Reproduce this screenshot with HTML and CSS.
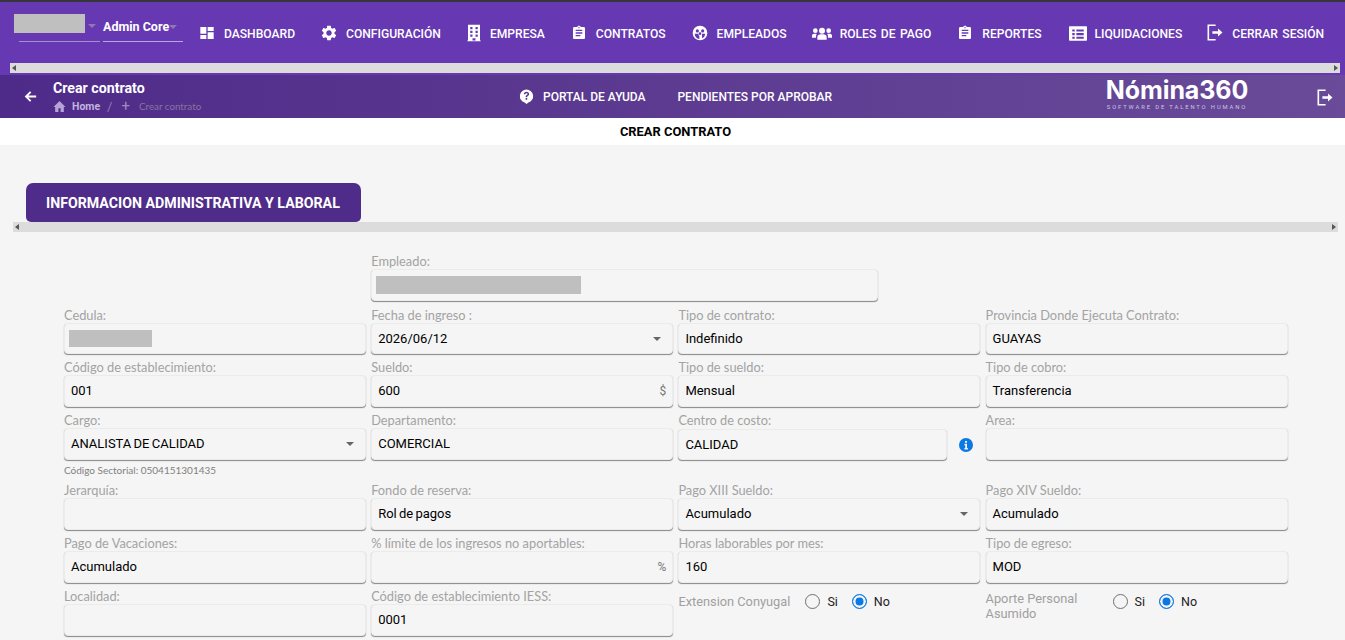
FILE: index.html
```html
<!DOCTYPE html>
<html lang="es">
<head>
<meta charset="utf-8">
<title>Crear contrato</title>
<link rel="stylesheet" href="styles.css">
</head>
<body>
<header class="topnav">
  <div class="topnav-row">
    <div class="selectors">
      <div class="sel sel-company"><span class="redact redact-co"></span><span class="caret caret-dim"></span></div>
      <div class="sel sel-admin"><b>Admin Core</b><span class="caret caret-dim"></span></div>
    </div>
    <nav class="menu">
      <a class="menu-item"><svg class="ic" viewBox="0 0 24 24"><path d="M2 13h9V3H2v10zm0 8h9v-6H2v6zm11 0h9V11h-9v10zm0-18v6h9V3h-9z"/></svg>DASHBOARD</a>
      <a class="menu-item"><svg class="ic" viewBox="1.500 1.500 21 21"><path d="M19.14 12.94c.04-.3.06-.61.06-.94 0-.32-.02-.64-.07-.94l2.03-1.58a.49.49 0 0 0 .12-.61l-1.92-3.32a.488.488 0 0 0-.59-.22l-2.39.96c-.5-.38-1.03-.7-1.62-.94l-.36-2.54a.484.484 0 0 0-.48-.41h-3.84c-.24 0-.43.17-.47.41l-.36 2.54c-.59.24-1.13.57-1.62.94l-2.39-.96c-.22-.08-.47 0-.59.22L2.74 8.87c-.12.21-.08.47.12.61l2.03 1.58c-.05.3-.09.63-.09.94s.02.64.07.94l-2.03 1.58a.49.49 0 0 0-.12.61l1.92 3.32c.12.22.37.29.59.22l2.39-.96c.5.38 1.03.7 1.62.94l.36 2.54c.05.24.24.41.48.41h3.84c.24 0 .44-.17.47-.41l.36-2.54c.59-.24 1.13-.56 1.62-.94l2.39.96c.22.08.47 0 .59-.22l1.92-3.32c.12-.22.07-.47-.12-.61l-2.01-1.58zM12 15.6c-1.98 0-3.6-1.62-3.6-3.6s1.62-3.6 3.6-3.6 3.6 1.62 3.6 3.6-1.62 3.6-3.6 3.6z"/></svg>CONFIGURACIÓN</a>
      <a class="menu-item item-empresa"><svg class="ic ic-tall" viewBox="0 0 24 24"><path fill-rule="evenodd" d="M4 1h16v21h1v1H3v-1h1V1zm3 3v3h3V4H7zm7 0v3h3V4h-3zM7 9v3h3V9H7zm7 0v3h3V9h-3zM7 14v3h3v-3H7zm7 0v3h3v-3h-3zm-4 5v3h4v-3h-4z"/></svg>EMPRESA</a>
      <a class="menu-item"><svg class="ic" viewBox="0 0 24 24"><path d="M19 3h-4.18C14.4 1.84 13.3 1 12 1c-1.3 0-2.4.84-2.82 2H5c-1.1 0-2 .9-2 2v14c0 1.1.9 2 2 2h14c1.1 0 2-.9 2-2V5c0-1.1-.9-2-2-2zm-7 0c.55 0 1 .45 1 1s-.45 1-1 1-1-.45-1-1 .45-1 1-1zm2 14H7v-2h7v2zm3-4H7v-2h10v2zm0-4H7V7h10v2z"/></svg>CONTRATOS</a>
      <a class="menu-item"><svg class="ic" viewBox="0 0 24 24"><path fill-rule="evenodd" d="M12 1a11 11 0 1 0 0 22 11 11 0 0 0 0-22zM8 6.5a2.400 2.400 0 1 1 0 4.800 2.400 2.400 0 0 1 0-4.800zm8 0a2.400 2.400 0 1 1 0 4.800 2.400 2.400 0 0 1 0-4.800zM12 11a2 2 0 1 1 0 4 2 2 0 0 1 0-4zm-8 2h5l2 4v4a9 9 0 0 1-7-8zm11 0h5a9 9 0 0 1-5 7v-7z"/></svg>EMPLEADOS</a>
      <a class="menu-item item-roles"><svg class="ic ic-wide" viewBox="0 0 32 24"><path d="M16 4a4.500 4.500 0 1 1 0 9 4.500 4.500 0 0 1 0-9zM6 5a3.500 3.500 0 1 1 0 7 3.500 3.500 0 0 1 0-7zm20 0a3.500 3.500 0 1 1 0 7 3.500 3.500 0 0 1 0-7zM9 22v-4c0-2.500 2.500-4 5-4h4c2.500 0 5 1.500 5 4v4H9zM1 19v-3c0-2 1.500-3 3-3h3.500C8 13.500 8 14 7.500 15 7 16 7 17 7 19H1zm30 0h-6c0-2 0-3-.5-4-.5-1-.5-1.500 0-2H28c1.500 0 3 1 3 3v3z"/></svg>ROLES DE PAGO</a>
      <a class="menu-item"><svg class="ic" viewBox="0 0 24 24"><path d="M19 3h-4.18C14.4 1.84 13.3 1 12 1c-1.3 0-2.4.84-2.82 2H5c-1.1 0-2 .9-2 2v14c0 1.1.9 2 2 2h14c1.1 0 2-.9 2-2V5c0-1.1-.9-2-2-2zm-7 0c.55 0 1 .45 1 1s-.45 1-1 1-1-.45-1-1 .45-1 1-1zm2 14H7v-2h7v2zm3-4H7v-2h10v2zm0-4H7V7h10v2z"/></svg>REPORTES</a>
      <a class="menu-item item-liq"><svg class="ic ic-list" viewBox="1 3 22 18"><path fill-rule="evenodd" d="M2 3h20a1 1 0 0 1 1 1v16a1 1 0 0 1-1 1H2a1 1 0 0 1-1-1V4a1 1 0 0 1 1-1zm3 4v2.500h3V7H5zm5 0v2.500h9V7h-9zm-5 4.500V14h3v-2.500H5zm5 0V14h9v-2.500h-9zM5 16v2.500h3V16H5zm5 0v2.500h9V16h-9z"/></svg>LIQUIDACIONES</a>
      <a class="menu-item"><svg class="ic ic-exit" viewBox="2.500 1.500 19.500 21"><path d="M3 2h10v2H5v16h8v2H3V2zm13 5 5.500 5-5.500 5v-3.500H9v-3h7V7z"/></svg>CERRAR SESIÓN</a>
    </nav>
  </div>
  <div class="fake-scroll fake-scroll-top"><span class="arrow arrow-l"></span><span class="arrow arrow-r"></span></div>
</header>

<section class="subbar">
  <div class="sub-left">
    <svg class="back" viewBox="0 0 24 24"><path d="M21 10.500H8.500l4.800-4.800L11.200 3.500 2.700 12l8.500 8.500 2.100-2.200-4.800-4.800H21v-3z"/></svg>
    <div class="crumbs">
      <h1 class="page-title">Crear contrato</h1>
      <div class="crumb-row">
        <svg class="home" viewBox="0 0 24 24"><path d="M10 22v-7h4v7h6v-9h3L12 2 1 13h3v9z"/></svg>
        <span class="crumb-home">Home</span><span class="crumb-sep">/</span>
        <span class="crumb-plus">+</span><span class="crumb-current">Crear contrato</span>
      </div>
    </div>
  </div>
  <div class="sub-center">
    <a class="sub-link"><svg class="ic" viewBox="0 0 24 24"><path fill-rule="evenodd" d="M12 1a10.500 10.500 0 0 0-3 20.600l3 2.400 3-2.400A10.500 10.500 0 0 0 12 1zm-.1 3.500c2.500 0 4.300 1.500 4.300 3.600 0 1.500-.8 2.400-1.900 3.100-1 .6-1.200 1-1.200 1.900h-2.500c0-1.800.5-2.600 1.800-3.400.9-.6 1.300-1 1.300-1.600 0-.8-.7-1.300-1.700-1.300-1.100 0-1.800.6-1.900 1.700H7.600c.1-2.500 1.900-4 4.300-4zM10.600 14.500h2.600V17h-2.600v-2.500z"/></svg>PORTAL DE AYUDA</a>
    <a class="sub-link">PENDIENTES POR APROBAR</a>
  </div>
  <div class="logo">
    <span class="logo-name">Nómina360</span>
    <span class="logo-sub">SOFTWARE DE TALENTO HUMANO</span>
  </div>
  <svg class="ic ic-exit sub-exit" viewBox="2.500 1.500 19.500 21"><path d="M3 2h10v2H5v16h8v2H3V2zm13 5 5.500 5-5.500 5v-3.500H9v-3h7V7z"/></svg>
</section>

<div class="titlebar">CREAR CONTRATO</div>

<main class="content">
  <div class="tab">INFORMACION ADMINISTRATIVA Y LABORAL</div>
  <div class="fake-scroll fake-scroll-tab"><span class="arrow arrow-l"></span><span class="arrow arrow-r"></span></div>

  <form class="form">
    <div class="field field-start2 field-span2">
      <label class="lbl">Empleado:</label>
      <div class="inp inp-emp"><span class="redact redact-emp"></span></div>
    </div>
    <div class="field field-start1">
      <label class="lbl">Cedula:</label>
      <div class="inp inp-red"><span class="redact redact-ced"></span></div>
    </div>
    <div class="field"><label class="lbl">Fecha de ingreso :</label><div class="inp inp-sel">2026/06/12<span class="caret"></span></div></div>
    <div class="field"><label class="lbl">Tipo de contrato:</label><div class="inp">Indefinido</div></div>
    <div class="field"><label class="lbl">Provincia Donde Ejecuta Contrato:</label><div class="inp">GUAYAS</div></div>

    <div class="field"><label class="lbl">Código de establecimiento:</label><div class="inp">001</div></div>
    <div class="field"><label class="lbl">Sueldo:</label><div class="inp inp-sel">600<span class="suffix">$</span></div></div>
    <div class="field"><label class="lbl">Tipo de sueldo:</label><div class="inp">Mensual</div></div>
    <div class="field"><label class="lbl">Tipo de cobro:</label><div class="inp">Transferencia</div></div>

    <div class="field"><label class="lbl">Cargo:</label><div class="inp inp-sel">ANALISTA DE CALIDAD<span class="caret"></span></div><div class="help">Código Sectorial: 0504151301435</div></div>
    <div class="field"><label class="lbl">Departamento:</label><div class="inp">COMERCIAL</div></div>
    <div class="field">
      <label class="lbl">Centro de costo:</label>
      <div class="inp-with-info">
        <div class="inp inp-grow">CALIDAD</div>
        <svg class="info" viewBox="0 0 24 24"><path fill-rule="evenodd" d="M12 0a12 12 0 1 0 0 24 12 12 0 0 0 0-24zm-1.700 5h3.400v3h-3.400V5zm-1 5h4.400v7h1.500v2.500H9.300V17h1.400v-4.500H9.300V10z"/></svg>
      </div>
    </div>
    <div class="field"><label class="lbl">Area:</label><div class="inp"></div></div>

    <div class="field"><label class="lbl">Jerarquía:</label><div class="inp"></div></div>
    <div class="field"><label class="lbl">Fondo de reserva:</label><div class="inp">Rol de pagos</div></div>
    <div class="field"><label class="lbl">Pago XIII Sueldo:</label><div class="inp inp-sel">Acumulado<span class="caret"></span></div></div>
    <div class="field"><label class="lbl">Pago XIV Sueldo:</label><div class="inp">Acumulado</div></div>

    <div class="field"><label class="lbl">Pago de Vacaciones:</label><div class="inp">Acumulado</div></div>
    <div class="field"><label class="lbl">% límite de los ingresos no aportables:</label><div class="inp inp-sel"><span class="suffix">%</span></div></div>
    <div class="field"><label class="lbl">Horas laborables por mes:</label><div class="inp">160</div></div>
    <div class="field"><label class="lbl">Tipo de egreso:</label><div class="inp">MOD</div></div>

    <div class="field"><label class="lbl">Localidad:</label><div class="inp"></div></div>
    <div class="field"><label class="lbl">Código de establecimiento IESS:</label><div class="inp">0001</div></div>
    <div class="field field-radio">
      <span class="radio-lbl">Extension Conyugal</span>
      <span class="radio"></span><span class="radio-txt">Si</span>
      <span class="radio radio-on"></span><span class="radio-txt">No</span>
    </div>
    <div class="field field-radio">
      <span class="radio-lbl radio-lbl-two">Aporte Personal Asumido</span>
      <span class="radio"></span><span class="radio-txt">Si</span>
      <span class="radio radio-on"></span><span class="radio-txt">No</span>
    </div>
  </form>
</main>
</body>
</html>
```
FILE: styles.css
```css
* { box-sizing: border-box; }
html, body { margin: 0; height: 640px; overflow: hidden; }
body { background: #f5f5f5; font-family: Roboto, "Liberation Sans", sans-serif; color: #000; }
a { color: inherit; text-decoration: none; }

.topnav { height: 75px; background: #6639b3; border-top: 2px solid #38363d; color: #fff; }
.topnav-row { display: flex; height: 61px; }
.selectors { display: flex; width: 184px; margin-left: 14px; padding-top: 12px; flex: none; }
.sel { height: 28px; display: flex; align-items: flex-start; border-bottom: 1px solid #b9a6dc; }
.sel-company { width: 81px; margin-left: 5px; border-bottom-color: #a48fd0; }
.sel-admin { width: 80px; margin-left: 3px; padding-top: 5px; font-size: 12.500px; line-height: 16px; }
.sel-admin b { font-weight: 700; }
.redact { display: block; background: #bfbfbf; }
.redact-co { width: 71px; height: 19px; margin-left: -5px; flex: none; }
.caret { display: inline-block; width: 0; height: 0; border-left: 4px solid transparent; border-right: 4px solid transparent; border-top: 4px solid #666; }
.caret-dim { border-top-color: #8d77b8; margin: 10px 0 0 3px; flex: none; }
.sel-admin .caret-dim { margin: 6px 0 0 0; }

.menu { display: flex; margin-left: 1px; padding-top: 22px; font-size: 12.100px; font-weight: 500; }
.menu-item { display: flex; align-items: flex-start; line-height: 20px; margin-right: 26px; white-space: nowrap; word-spacing: 1.500px; }
.menu-item:last-child { margin-right: 0; }
.item-empresa { margin-left: -2px; }
.item-roles { margin-left: -2px; }
.item-liq { margin-left: 1px; margin-right: 25px; }
.ic { width: 16px; height: 16px; fill: #fff; margin: 1px 9px 0 0; flex: none; }
.ic-tall { width: 18px; height: 18px; margin: 0 7px 0 0; }
.ic-wide { width: 22px; margin-right: 7px; }
.ic-list { width: 18px; height: 15px; margin: 2px 8px 0 0; }
.ic-exit { height: 17px; margin-top: 0; }

.fake-scroll { height: 10px; background: #dcdcdc; display: flex; justify-content: space-between; align-items: center; padding: 0 2px; }
.fake-scroll-top { margin: 0 5px 0 10px; }
.fake-scroll-tab { margin: 0 7px 0 13px; }
.arrow { width: 0; height: 0; border-top: 3px solid transparent; border-bottom: 3px solid transparent; }
.arrow-l { border-right: 4px solid #555; }
.arrow-r { border-left: 4px solid #555; }

.subbar { height: 43px; display: flex; color: #fff; background: linear-gradient(90deg, #4f2b89, #694b99); }
.sub-left { width: 519px; display: flex; padding-left: 23px; flex: none; }
.back { width: 15px; height: 15px; fill: #fff; margin: 14px 15px 0 0; flex: none; }
.page-title { margin: 5px 0 0; font-size: 14.200px; line-height: 16px; font-weight: 700; }
.crumb-row { display: flex; align-items: center; height: 14px; margin-top: 3px; font-size: 10px; }
.home { width: 13px; height: 13px; fill: #b6a4d6; margin-right: 6px; }
.crumb-home { font-weight: 700; color: #c2b4de; font-size: 10.500px; }
.crumb-sep { margin: 0 9px 0 7px; color: #8e7bb0; font-size: 13px; }
.crumb-plus { margin-right: 9px; color: #9d8cbd; font-size: 15px; }
.crumb-current { font-family: Lato, sans-serif; color: #86749f; font-size: 9.800px; }
.sub-center { display: flex; width: 587px; padding-top: 14px; flex: none; font-size: 12px; font-weight: 500; }
.sub-link { display: flex; line-height: 16px; margin-right: 32px; white-space: nowrap; }
.sub-link .ic { width: 15px; height: 15px; margin: 0 9px 0 0; }
.logo { display: flex; flex-direction: column; align-items: center; width: 142px; padding-top: 5px; flex: none; }
.logo-name { font-family: Inter, sans-serif; font-size: 25px; line-height: 20px; font-weight: 700; letter-spacing: -.1px; white-space: nowrap; }
.logo-sub { font-size: 5.800px; line-height: 7px; letter-spacing: 1.900px; color: #cfc5e0; white-space: nowrap; margin-top: 4px; }
.sub-exit { margin: 14px 0 0 69px; }

.titlebar { height: 27px; background: #fff; text-align: center; font-size: 12.900px; font-weight: 700; line-height: 28px; padding-left: 6px; }

.content { padding-top: 38px; }
.tab { width: 335px; height: 39px; margin-left: 26px; background: #502c8a; color: #fff; border-radius: 7px 7px 5px 5px; font-size: 14.200px; font-weight: 700; line-height: 41px; padding-left: 20px; white-space: nowrap; }

.form { display: grid; grid-template-columns: repeat(4, 302px); column-gap: 5.200px; margin: 16px 0 0 64px; }
.field-start2 { grid-column: 2 / span 2; }
.field-start1 { grid-column: 1; }
.lbl { display: block; height: 21px; padding-top: 6px; font-family: Lato, sans-serif; font-size: 12.800px; line-height: 15px; color: #a3a3a3; white-space: nowrap; }
.inp { position: relative; height: 32px; padding: 0 6px; background: #f5f5f5; border: 1px solid #ebebeb; border-radius: 4px; box-shadow: 0 1px 1px rgba(0,0,0,.45); font-size: 13px; word-spacing: -1px; line-height: 30px; white-space: nowrap; }
.field:nth-child(n+2):nth-child(-n+5) { padding-top: 1px; }
.field:nth-child(n+2):nth-child(-n+5) .inp { height: 31px; }
.inp-emp { width: 507px; padding: 6px 4px; }
.field .inp-red { padding: 6px 4px; }
.redact-emp { width: 205px; height: 18px; }
.redact-ced { width: 83px; height: 17px; }
.inp-sel .caret { position: absolute; right: 11px; top: 13px; }
.suffix { position: absolute; right: 6px; top: 0; color: #777; font-size: 12px; }
.inp-with-info { display: flex; align-items: center; padding-top: 1px; }
.inp-grow { width: 269px; height: 31px; flex: none; }
.info { width: 14px; height: 14px; fill: #0b78e3; margin-left: 12px; flex: none; }
.help { height: 15px; margin-top: 2px; font-family: Lato, sans-serif; font-size: 10px; line-height: 16px; color: #808080; }

.field-radio { display: flex; align-items: flex-start; padding-top: 11px; font-size: 12.500px; line-height: 15px; }
.radio-lbl { width: 127px; color: #a0a0a0; font-size: 12.800px; }
.radio-lbl-two { margin-top: -3px; }
.radio { width: 15px; height: 15px; border: 1.500px solid #707070; border-radius: 50%; flex: none; background: #f5f5f5; }
.radio-on { border-color: #0b78e3; box-shadow: inset 0 0 0 2.500px #f5f5f5; background: #0b78e3; }
.radio-txt { margin: 0 14px 0 7px; color: #222; }
```
